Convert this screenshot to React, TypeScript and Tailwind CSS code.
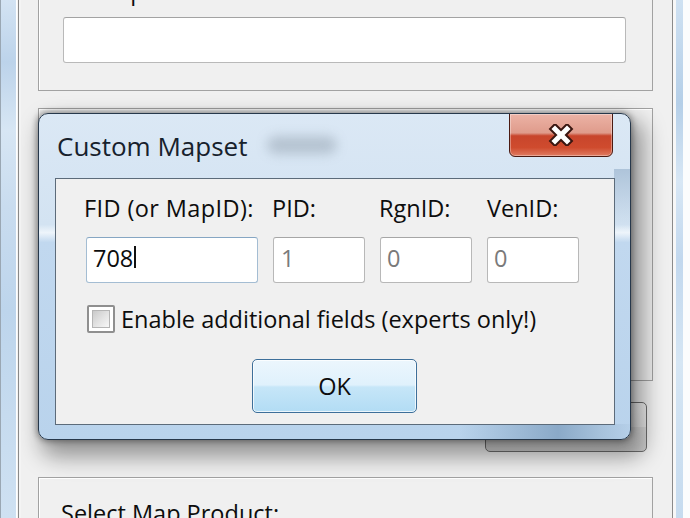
export default function App() {
  return (
    <div className="relative w-[690px] h-[518px] overflow-hidden flex bg-[#f0f0f0] text-[#0d0d0d] font-['Open_Sans','Noto_Sans',sans-serif]">
      {/* left parent-window frame */}
      <div className="w-[16px] h-full bg-[linear-gradient(180deg,#d3e3f3_0%,#bcd3ea_12%,#d7e6f4_25%,#c9dcef_40%,#bdd5ec_60%,#cfe1f2_100%)] border-l border-[#9aa7b3]" />
      <div className="w-[5px] h-full bg-[#f4f4f4] border-l border-white">
        <div className="ml-[1px] w-[1px] h-full bg-[#8a8a8a]" />
      </div>

      {/* parent client area */}
      <div className="w-[651px] h-full flex flex-col">
        {/* top groupbox */}
        <div className="-mt-[30px] ml-[17px] w-[615px] h-[121px] shrink-0 border border-[#a2a2a2] shadow-[inset_1px_1px_0_#ffffff] pt-[6px] pl-[23px]">
          <div className="text-[23.5px] leading-[28px]">Description:</div>
          <div className="mt-[12px] ml-[1px] w-[563px] h-[46px] bg-white border border-[#b9b9b9] border-t-[#a3a3a3] rounded-[3px]" />
        </div>

        {/* second groupbox (behind dialog) */}
        <div className="mt-[17px] ml-[17px] w-[615px] h-[273px] shrink-0 border border-[#a2a2a2] shadow-[inset_1px_1px_0_#ffffff]" />

        {/* button behind dialog */}
        <div className="mt-[21px] ml-[464px] w-[162px] h-[50px] shrink-0 rounded-[5px] border border-[#6f6f6f] bg-[linear-gradient(180deg,#f2f2f2_0%,#ebebeb_50%,#dddddd_51%,#cfcfcf_100%)]" />

        {/* bottom groupbox */}
        <div className="mt-[25px] ml-[17px] w-[615px] h-[100px] shrink-0 border border-[#a2a2a2] shadow-[inset_1px_1px_0_#ffffff] pt-[21px] pl-[22px]">
          <div className="text-[23.5px] leading-[28px]">Select Map Product:</div>
        </div>
      </div>

      {/* right parent-window frame */}
      <div className="w-[18px] h-full flex">
        <div className="w-[1px] h-full bg-[#8a8a8a]" />
        <div className="w-[3px] h-full bg-[#f7f7f7]" />
        <div className="w-[7px] h-full bg-[linear-gradient(180deg,#cfe1f2_0%,#b5cfe8_20%,#d8e7f5_35%,#c2d8ee_50%,#d6e6f4_70%,#c6dbef_100%)]" />
        <div className="w-[7px] h-full bg-[#fbfcfd]" />
      </div>

      {/* Custom Mapset dialog */}
      <div className="absolute left-[38px] top-[113px] w-[593px] h-[327px] rounded-[10px] border border-[#27384b] shadow-[0_0_6px_1px_rgba(0,0,0,0.4),8px_12px_22px_5px_rgba(0,0,0,0.38)] bg-[linear-gradient(180deg,#dbe8f5_0%,#d3e3f2_34%,#eef5fb_36.5%,#c1d8ef_39.5%,#b9d3ec_100%)] overflow-hidden">
        {/* glass details */}
        <div className="absolute left-[228px] top-[22px] w-[70px] h-[18px] rounded-full bg-[#7f8d9b] opacity-40 blur-[6px]" />
        <div className="absolute right-0 top-[55px] w-[16px] h-[60px] bg-[linear-gradient(180deg,#aec4da_0%,rgba(174,196,218,0)_100%)]" />
        <div className="absolute bottom-0 left-[420px] w-[180px] h-[15px] bg-[linear-gradient(90deg,rgba(124,156,189,0)_0%,#7f9fbf_55%,#a4bfd9_80%,rgba(164,191,217,0)_100%)] opacity-80" />

        {/* title bar */}
        <div className="relative h-[64px] pt-[16px] pl-[18px]">
          <div className="text-[26px] leading-[32px] text-[#17212c]">Custom Mapset</div>
        </div>

        {/* close button */}
        <div className="absolute left-[470px] top-[-1px] w-[104px] h-[44px] rounded-b-[6px] border border-[#4a1a12] bg-[linear-gradient(180deg,#ecb3a6_0%,#df9b8b_45%,#c8452c_52%,#cf4b2e_80%,#e07c62_100%)] shadow-[inset_0_0_0_1px_rgba(255,255,255,0.35)] flex items-center justify-center">
          <svg width="28" height="22" viewBox="0 0 28 22">
            <path d="M8 5 L20 17 M20 5 L8 17" stroke="#3a1610" strokeWidth="9" strokeLinecap="square" fill="none" />
            <path d="M8 5 L20 17 M20 5 L8 17" stroke="#ffffff" strokeWidth="5" strokeLinecap="square" fill="none" />
          </svg>
        </div>

        {/* client area */}
        <div className="relative ml-[16px] w-[560px] h-[247px] border border-[#5c6b7a] bg-[#f0f0f0]">
          <div className="pt-[15px] pl-[30px] grid grid-cols-[172px_92px_92px_92px] gap-x-[15px] text-[23.5px] leading-[28px]">
            <div className="-ml-[2px] whitespace-nowrap tracking-[0.4px]">FID (or MapID):</div>
            <div className="-ml-[1px]">PID:</div>
            <div className="-ml-[1px]">RgnID:</div>
            <div>VenID:</div>

            <div className="mt-[15px] h-[46px] bg-white border border-[#a4bdd3] border-t-[#86a6c3] rounded-[3px] pl-[6px] pt-[6px] flex items-start">
              <span>708</span>
              <span className="mt-[2px] ml-[1px] w-[2px] h-[22px] bg-[#111]" />
            </div>
            <div className="mt-[15px] h-[46px] bg-white border border-[#b8b8b8] border-t-[#a6a6a6] rounded-[3px] pl-[7px] pt-[6px] text-[#7a7a7a]">1</div>
            <div className="mt-[15px] h-[46px] bg-white border border-[#b8b8b8] border-t-[#a6a6a6] rounded-[3px] pl-[6px] pt-[6px] text-[#7a7a7a]">0</div>
            <div className="mt-[15px] h-[46px] bg-white border border-[#b8b8b8] border-t-[#a6a6a6] rounded-[3px] pl-[6px] pt-[6px] text-[#7a7a7a]">0</div>
          </div>

          {/* checkbox row */}
          <div className="mt-[21px] ml-[31px] h-[29px] flex items-center">
            <div className="w-[28px] h-[28px] border-2 border-[#8f8f8f] rounded-[2px] bg-white p-[3px]">
              <div className="w-full h-full border border-[#b5b5b5] bg-[linear-gradient(135deg,#c9c9c9_0%,#e2e2e2_50%,#f7f7f7_100%)]" />
            </div>
            <span className="ml-[6px] text-[23.5px] leading-[28px] whitespace-nowrap">Enable additional fields (experts only!)</span>
          </div>

          {/* OK button */}
          <div className="mt-[26px] ml-[196px] w-[165px] h-[54px] rounded-[5px] border border-[#3d6f9a] bg-[linear-gradient(180deg,#ecf6fd_0%,#dff1fc_48%,#c6e6f8_52%,#b2dcf4_100%)] shadow-[inset_0_0_0_1px_rgba(255,255,255,0.75)] flex items-center justify-center text-[23.5px] leading-[28px]">
            OK
          </div>
        </div>
      </div>
    </div>
  );
}
